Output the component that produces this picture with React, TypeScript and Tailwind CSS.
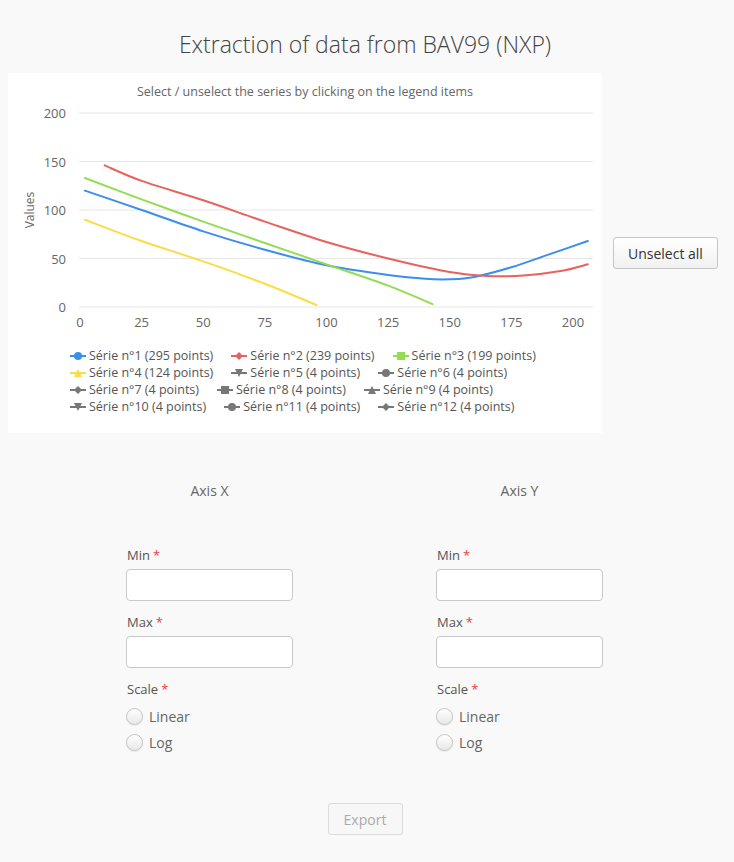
const X0 = 72;
const Y0 = 234;
const sx = (v: number) => X0 + v * 2.465;
const sy = (v: number) => Y0 - v * 0.97;

type Pt = [number, number];

const series: { color: string; pts: Pt[] }[] = [
  {
    color: "#3a8fee",
    pts: [[2, 120], [25, 100], [50, 78], [75, 59], [100, 43], [125, 33], [140, 29], [150, 28.5], [160, 31], [175, 41], [190, 54], [206, 68]],
  },
  {
    color: "#e8625f",
    pts: [[10, 146], [25, 130], [50, 110], [75, 88], [100, 67], [125, 50], [150, 36], [165, 32], [180, 32.5], [195, 37], [206, 44]],
  },
  {
    color: "#92dd52",
    pts: [[2, 133], [25, 111], [50, 88], [75, 66], [100, 44], [125, 22], [143, 3]],
  },
  {
    color: "#fadd44",
    pts: [[2, 90], [25, 68], [50, 47], [75, 24], [96, 2]],
  },
];

function smoothPath(pts: Pt[]) {
  const p = pts.map(([x, y]) => [sx(x), sy(y)]);
  let d = `M${p[0][0]},${p[0][1]}`;
  for (let i = 0; i < p.length - 1; i++) {
    const p0 = p[i - 1] || p[i];
    const p1 = p[i];
    const p2 = p[i + 1];
    const p3 = p[i + 2] || p2;
    const c1x = p1[0] + (p2[0] - p0[0]) / 6;
    const c1y = p1[1] + (p2[1] - p0[1]) / 6;
    const c2x = p2[0] - (p3[0] - p1[0]) / 6;
    const c2y = p2[1] - (p3[1] - p1[1]) / 6;
    d += ` C${c1x},${c1y} ${c2x},${c2y} ${p2[0]},${p2[1]}`;
  }
  return d;
}

type Shape = "circle" | "diamond" | "square" | "triangle" | "tdown";

function Marker({ shape, color }: { shape: Shape; color: string }) {
  return (
    <svg width="16" height="10" viewBox="0 0 16 10" className="shrink-0">
      <line x1="0" y1="5" x2="16" y2="5" stroke={color} strokeWidth="2" />
      {shape === "circle" && <circle cx="8" cy="5" r="4" fill={color} />}
      {shape === "diamond" && <path d="M8 1 L12 5 L8 9 L4 5 Z" fill={color} />}
      {shape === "square" && <rect x="4" y="1" width="8" height="8" fill={color} />}
      {shape === "triangle" && <path d="M8 1 L12 9 L4 9 Z" fill={color} />}
      {shape === "tdown" && <path d="M4 1 L12 1 L8 9 Z" fill={color} />}
    </svg>
  );
}

const legendRows: { label: string; shape: Shape; color: string }[][] = [
  [
    { label: "Série n°1 (295 points)", shape: "circle", color: "#3a8fee" },
    { label: "Série n°2 (239 points)", shape: "diamond", color: "#e8625f" },
    { label: "Série n°3 (199 points)", shape: "square", color: "#92dd52" },
  ],
  [
    { label: "Série n°4 (124 points)", shape: "triangle", color: "#fadd44" },
    { label: "Série n°5 (4 points)", shape: "tdown", color: "#777" },
    { label: "Série n°6 (4 points)", shape: "circle", color: "#777" },
  ],
  [
    { label: "Série n°7 (4 points)", shape: "diamond", color: "#777" },
    { label: "Série n°8 (4 points)", shape: "square", color: "#777" },
    { label: "Série n°9 (4 points)", shape: "triangle", color: "#777" },
  ],
  [
    { label: "Série n°10 (4 points)", shape: "tdown", color: "#777" },
    { label: "Série n°11 (4 points)", shape: "circle", color: "#777" },
    { label: "Série n°12 (4 points)", shape: "diamond", color: "#777" },
  ],
];

function Chart() {
  const yTicks = [0, 50, 100, 150, 200];
  const xTicks = [0, 25, 50, 75, 100, 125, 150, 175, 200];
  return (
    <div className="w-[594px] h-[360px] bg-white flex flex-col">
      <svg width="594" height="274" viewBox="0 0 594 274" style={{ fontFamily: "'Open Sans', sans-serif" }}>
        <text x="297" y="23" textAnchor="middle" fontSize="12.5" fill="#666">
          Select / unselect the series by clicking on the legend items
        </text>
        {yTicks.map((t) => (
          <g key={t}>
            <line x1="71" x2="585" y1={sy(t)} y2={sy(t)} stroke="#e6e6e6" strokeWidth="1" />
            <text x="58" y={sy(t) + 5} textAnchor="end" fontSize="13" fill="#666">
              {t}
            </text>
          </g>
        ))}
        {xTicks.map((t) => (
          <text key={t} x={sx(t)} y="254" textAnchor="middle" fontSize="13" fill="#666">
            {t}
          </text>
        ))}
        <text x="26" y="137" textAnchor="middle" fontSize="12" fill="#666" transform="rotate(-90 26 137)">
          Values
        </text>
        {series.map((s, i) => (
          <path key={i} d={smoothPath(s.pts)} fill="none" stroke={s.color} strokeWidth="2" strokeLinejoin="round" strokeLinecap="round" />
        ))}
      </svg>
      <div className="flex flex-col items-start pl-[62px] text-[12.5px] leading-[17px] text-[#555] font-['Open_Sans',sans-serif]">
        {legendRows.map((row, i) => (
          <div key={i} className="flex gap-[18px]">
            {row.map((it) => (
              <div key={it.label} className="flex items-center gap-[3px]">
                <Marker shape={it.shape} color={it.color} />
                <span>{it.label}</span>
              </div>
            ))}
          </div>
        ))}
      </div>
    </div>
  );
}

function Label({ text }: { text: string }) {
  return (
    <div className="text-[13px] leading-[18px] text-[#555] pl-[1px]">
      {text}
      <span className="text-[#e5413c] ml-[3px]">*</span>
    </div>
  );
}

function Radio({ text }: { text: string }) {
  return (
    <label className="flex items-center h-[26px] gap-[6px] text-[14px] text-[#666]">
      <span className="w-[17px] h-[17px] rounded-full border border-[#c4c4c4] bg-gradient-to-b from-white to-[#e8e8e8] shadow-[0_1px_1px_rgba(0,0,0,0.08)]" />
      {text}
    </label>
  );
}

function AxisColumn({ title }: { title: string }) {
  return (
    <div className="w-[167px] flex flex-col">
      <div className="text-center text-[14px] leading-[20px] text-[#666]">{title}</div>
      <div className="mt-[45px]">
        <Label text="Min" />
      </div>
      <input className="mt-[5px] h-[32px] w-[167px] bg-white border border-[#c9c9c9] rounded-[4px]" />
      <div className="mt-[12px]">
        <Label text="Max" />
      </div>
      <input className="mt-[5px] h-[32px] w-[167px] bg-white border border-[#c9c9c9] rounded-[4px]" />
      <div className="mt-[12px]">
        <Label text="Scale" />
      </div>
      <div className="mt-[5px] flex flex-col">
        <Radio text="Linear" />
        <Radio text="Log" />
      </div>
    </div>
  );
}

export default function App() {
  return (
    <main className="min-h-[862px] w-[734px] bg-[#f9f9f9] font-['Open_Sans',sans-serif] pt-[29px]">
      <h1 className="text-center text-[23px] leading-[31px] font-light text-[#444] ml-[-4px]">
        Extraction of data from BAV99 (NXP)
      </h1>
      <div className="flex items-center mt-[13px]">
        <div className="ml-[8px]">
          <Chart />
        </div>
        <button className="ml-[11px] h-[32px] px-[14px] text-[14px] text-[#333] bg-gradient-to-b from-white to-[#f1f1f1] border border-[#c6c6c6] rounded-[3px]">
          Unselect all
        </button>
      </div>
      <div className="flex pl-[126px] gap-[143px] mt-[48px]">
        <AxisColumn title="Axis X" />
        <AxisColumn title="Axis Y" />
      </div>
      <div className="flex justify-center mt-[48px] ml-[-4px]">
        <button disabled className="h-[32px] w-[75px] text-[14px] text-[#aaa] bg-[#f7f7f7] border border-[#dcdcdc] rounded-[3px]">
          Export
        </button>
      </div>
    </main>
  );
}
